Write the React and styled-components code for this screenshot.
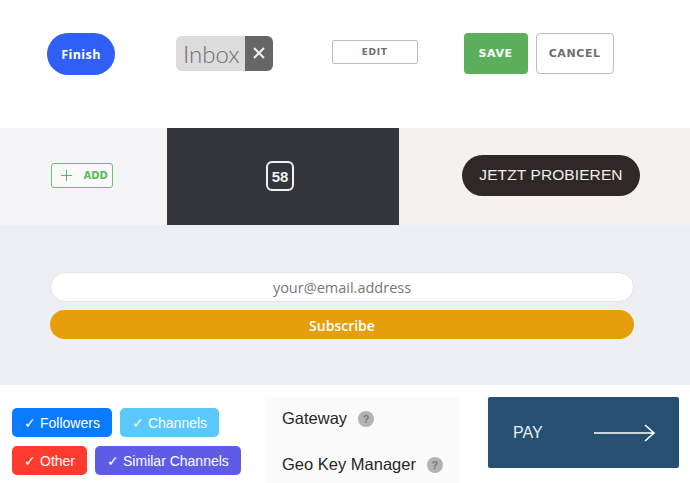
import styled, { createGlobalStyle } from "styled-components";

const Global = createGlobalStyle`
  body {
    margin: 0;
    font-family: "Liberation Sans", Arial, sans-serif;
    background: #ffffff;
  }
`;

const Page = styled.div`
  width: 690px;
  height: 483px;
  overflow: hidden;
  display: flex;
  flex-direction: column;
`;

/* ---------- top row ---------- */
const TopRow = styled.div`
  height: 128px;
  box-sizing: border-box;
  padding: 0 0 22px 47px;
  display: flex;
  align-items: center;
  background: #ffffff;
`;

const FinishButton = styled.button`
  width: 68px;
  height: 42px;
  margin-top: 2px;
  border: none;
  border-radius: 21px;
  background: #2f5ff5;
  color: #fff;
  font-family: "Open Sans", sans-serif;
  font-weight: 700;
  font-size: 12.5px;
  letter-spacing: 0.4px;
`;

const Chip = styled.div`
  margin-left: 61px;
  height: 35px;
  display: flex;
  border-radius: 6px;
  overflow: hidden;
`;

const ChipLabel = styled.span`
  background: #dcdcdc;
  color: #6e6e6e;
  font-family: "Lato", sans-serif;
  font-weight: 300;
  font-size: 24px;
  line-height: 35px;
  padding: 0 5px 0 7px;
`;

const ChipClose = styled.span`
  width: 28px;
  background: #666666;
  display: flex;
  align-items: center;
  justify-content: center;
`;

const OutlineButton = styled.button`
  margin-left: ${(p) => p.$ml}px;
  width: ${(p) => p.$w}px;
  height: ${(p) => p.$h}px;
  margin-top: ${(p) => p.$mt || 0}px;
  background: #fff;
  border: 1px solid #bdbdbd;
  border-radius: ${(p) => p.$r}px;
  color: #6f6f6f;
  font-family: "DejaVu Sans", sans-serif;
  font-weight: 700;
  font-size: ${(p) => p.$fs}px;
  letter-spacing: 0.6px;
`;

const SaveButton = styled.button`
  margin-left: 46px;
  width: 64px;
  height: 41px;
  border: none;
  border-radius: 4px;
  background: #5cb05c;
  color: #fff;
  font-family: "DejaVu Sans", sans-serif;
  font-weight: 700;
  font-size: 11px;
  letter-spacing: 0.6px;
`;

/* ---------- middle band ---------- */
const Band = styled.div`
  height: 97px;
  display: grid;
  grid-template-columns: 167px 232px 1fr;
`;

const Cell = styled.div`
  display: flex;
  align-items: center;
  justify-content: center;
  background: ${(p) => p.$bg};
  padding-left: ${(p) => p.$pl || 0}px;
  padding-right: ${(p) => p.$pr || 0}px;
`;

const AddButton = styled.button`
  width: 62px;
  height: 25px;
  margin-top: -2px;
  border: 1px solid #6cc06c;
  border-radius: 3px;
  background: #fafafa;
  display: flex;
  align-items: center;
  gap: 12px;
  padding: 0 0 0 9px;
  color: #5cb85c;
  font-family: "DejaVu Sans", sans-serif;
  font-weight: 700;
  font-size: 10px;
`;

const CountBadge = styled.div`
  width: 24px;
  height: 26px;
  border: 2px solid #f2f2f2;
  border-radius: 6px;
  display: flex;
  align-items: center;
  justify-content: center;
  color: #f2f2f2;
  font-family: "Liberation Sans", sans-serif;
  font-weight: 700;
  font-size: 15px;
  margin-top: -1px;
`;

const TryButton = styled.button`
  width: 178px;
  height: 41px;
  margin-top: -3px;
  border: none;
  border-radius: 21px;
  background: #2f2826;
  color: #f0eeee;
  font-family: "Liberation Sans", sans-serif;
  font-size: 15.5px;
  letter-spacing: 0.1px;
`;

/* ---------- subscribe ---------- */
const Subscribe = styled.div`
  height: 160px;
  box-sizing: border-box;
  background: #eeeff4;
  padding: 47px 56px 0 50px;
  display: flex;
  flex-direction: column;
  gap: 8px;
`;

const EmailInput = styled.input`
  height: 30px;
  box-sizing: border-box;
  border: 1px solid #e2e3ea;
  border-radius: 15px;
  background: #fff;
  text-align: center;
  font-family: "Open Sans", sans-serif;
  font-size: 14.5px;
  outline: none;
  &::placeholder {
    color: #777;
  }
`;

const SubscribeButton = styled.button`
  height: 29px;
  border: none;
  border-radius: 15px;
  background: #e69f0a;
  color: #fff;
  font-family: "Open Sans", sans-serif;
  font-weight: 600;
  font-size: 14px;
  padding-top: 3px;
`;

/* ---------- bottom ---------- */
const Bottom = styled.div`
  flex: 1;
  display: flex;
  background: #fff;
`;

const Tags = styled.div`
  width: 265px;
  box-sizing: border-box;
  padding: 23px 0 0 12px;
  display: flex;
  flex-direction: column;
  gap: 9px;
`;

const TagRow = styled.div`
  display: flex;
  gap: 8px;
`;

const Tag = styled.span`
  height: 29px;
  box-sizing: border-box;
  padding: 0 12px;
  border-radius: 5px;
  background: ${(p) => p.$bg};
  color: #fff;
  font-family: "Liberation Sans", sans-serif;
  font-size: 14px;
  display: flex;
  align-items: center;
  gap: 4px;
`;

const Settings = styled.div`
  width: 195px;
  margin-top: 12px;
  background: #fbfbfb;
  box-sizing: border-box;
  padding: 12px 0 0 17px;
  display: flex;
  flex-direction: column;
  gap: 27px;
`;

const SettingRow = styled.div`
  display: flex;
  align-items: center;
  gap: 11px;
  color: #262626;
  font-family: "Liberation Sans", sans-serif;
  font-size: 16.5px;
`;

const Help = styled.span`
  width: 16px;
  height: 16px;
  border-radius: 50%;
  background: #b3b3b3;
  color: #7a7a7a;
  font-size: 11px;
  font-weight: 700;
  display: flex;
  align-items: center;
  justify-content: center;
`;

const PayCell = styled.div`
  flex: 1;
  padding: 12px 11px 15px 28px;
  display: flex;
`;

const PayButton = styled.button`
  flex: 1;
  border: none;
  border-radius: 2px;
  background: #274f72;
  color: #e6ecf2;
  font-family: "Liberation Sans", sans-serif;
  font-size: 16px;
  display: flex;
  align-items: center;
  justify-content: space-between;
  padding: 0 23px 0 25px;
`;

const Check = () => <span>✓</span>;

export default function App() {
  return (
    <Page>
      <Global />
      <TopRow>
        <FinishButton>Finish</FinishButton>
        <Chip>
          <ChipLabel>Inbox</ChipLabel>
          <ChipClose>
            <svg width="12" height="12" viewBox="0 0 12 12">
              <path d="M1 1 L11 11 M11 1 L1 11" stroke="#f0f0f0" strokeWidth="2" />
            </svg>
          </ChipClose>
        </Chip>
        <OutlineButton $ml={59} $w={86} $h={24} $r={2} $fs={9} $mt={-2}>
          EDIT
        </OutlineButton>
        <SaveButton>SAVE</SaveButton>
        <OutlineButton $ml={8} $w={78} $h={41} $r={4} $fs={11}>
          CANCEL
        </OutlineButton>
      </TopRow>

      <Band>
        <Cell $bg="#f5f5f7" $pr={4}>
          <AddButton>
            <svg width="11" height="11" viewBox="0 0 11 11">
              <path d="M5.5 0 V11 M0 5.5 H11" stroke="#5cb85c" strokeWidth="1.1" />
            </svg>
            ADD
          </AddButton>
        </Cell>
        <Cell $bg="#34363b" $pr={6}>
          <CountBadge>58</CountBadge>
        </Cell>
        <Cell $bg="#f3f2f1" $pl={13}>
          <TryButton>JETZT PROBIEREN</TryButton>
        </Cell>
      </Band>

      <Subscribe>
        <EmailInput placeholder="your@email.address" />
        <SubscribeButton>Subscribe</SubscribeButton>
      </Subscribe>

      <Bottom>
        <Tags>
          <TagRow>
            <Tag $bg="#0a7aff">
              <Check /> Followers
            </Tag>
            <Tag $bg="#5ac8fa">
              <Check /> Channels
            </Tag>
          </TagRow>
          <TagRow>
            <Tag $bg="#ff3b30">
              <Check /> Other
            </Tag>
            <Tag $bg="#5e5ce6">
              <Check /> Similar Channels
            </Tag>
          </TagRow>
        </Tags>
        <Settings>
          <SettingRow>
            Gateway <Help>?</Help>
          </SettingRow>
          <SettingRow>
            Geo Key Manager <Help>?</Help>
          </SettingRow>
        </Settings>
        <PayCell>
          <PayButton>
            PAY
            <svg width="62" height="20" viewBox="0 0 62 20">
              <path d="M0 10 H60 M51 2 L60 10 L51 18" stroke="#fff" strokeWidth="1.6" fill="none" />
            </svg>
          </PayButton>
        </PayCell>
      </Bottom>
    </Page>
  );
}
